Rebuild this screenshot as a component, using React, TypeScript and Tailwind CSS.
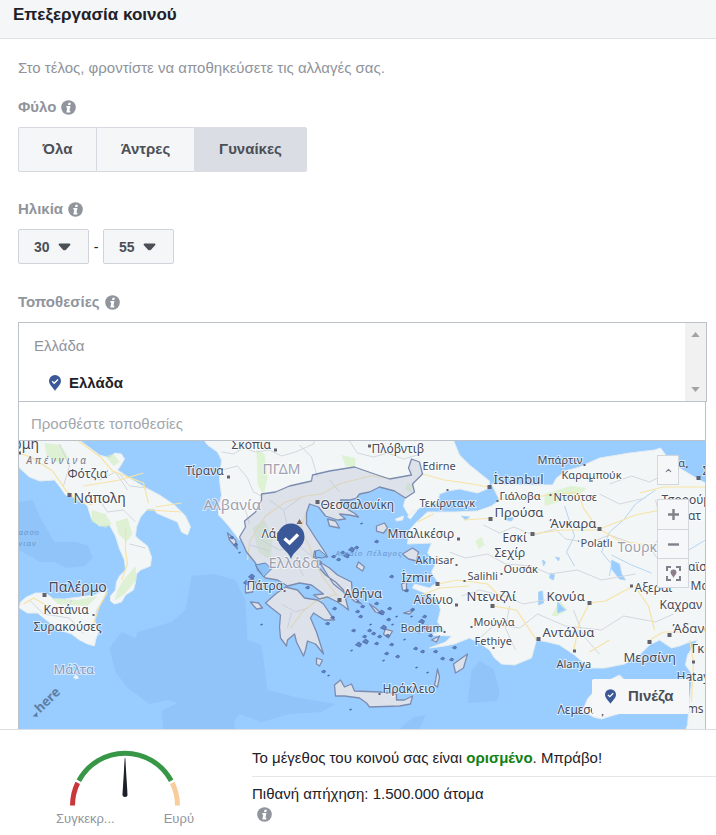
import React from 'react';
import { ChevronUp } from 'lucide-react';

type Label = { text: string; x: number; y: number; size: number; tone?: string; dot?: [number, number, number] };

const CITY = '#474b59';
const COUNTRY = '#9fa1b0';

const labels: Label[] = [
  { text: 'ώμη', x: 11, y: 449, size: 14, dot: [20, 453, 3] },
  { text: 'Φότζια', x: 68, y: 478, size: 12, dot: [108, 471, 1] },
  { text: 'Νάπολη', x: 74, y: 503, size: 14, dot: [70, 495, 4] },
  { text: 'Παλέρμο', x: 49, y: 592, size: 14, dot: [45, 595, 4] },
  { text: 'Κατάνια', x: 44, y: 614, size: 12, dot: [94, 615, 2] },
  { text: 'Συρακούσες', x: 34, y: 631, size: 12, dot: [101, 632, 2] },
  { text: 'Μάλτα', x: 54, y: 674, size: 13, tone: '#8a9bc0' },
  { text: 'Τίρανα', x: 186, y: 475, size: 12, dot: [229, 477, 3] },
  { text: 'Σκόπια', x: 232, y: 449, size: 12, dot: [276, 450, 3] },
  { text: 'ΠΓΔΜ', x: 263, y: 474, size: 14, tone: COUNTRY },
  { text: 'Αλβανία', x: 204, y: 510, size: 15, tone: COUNTRY },
  { text: 'Πλόβντιβ', x: 372, y: 453, size: 12, dot: [370, 446, 3] },
  { text: 'Edirne', x: 423, y: 470, size: 11 },
  { text: 'Θεσσαλονίκη', x: 321, y: 509, size: 12, dot: [318, 502, 4] },
  { text: 'Λάρισα', x: 262, y: 538, size: 12 },
  { text: 'Ελλάδα', x: 269, y: 568, size: 15, tone: COUNTRY },
  { text: 'Πάτρα', x: 247, y: 590, size: 12, dot: [285, 591, 2] },
  { text: 'Αθήνα', x: 344, y: 598, size: 13, dot: [340, 600, 4] },
  { text: 'Ηράκλειο', x: 383, y: 693, size: 12, dot: [380, 694, 2] },
  { text: 'Τεκίρνταγκ', x: 420, y: 507, size: 11, dot: [448, 490, 2] },
  { text: 'Μπαλικέσιρ', x: 388, y: 538, size: 12, dot: [459, 539, 3] },
  { text: 'Akhisar', x: 416, y: 564, size: 11, dot: [457, 565, 2] },
  { text: 'İzmir', x: 402, y: 582, size: 13, dot: [438, 584, 4] },
  { text: 'Αϊδίνιο', x: 414, y: 604, size: 12, dot: [457, 605, 3] },
  { text: 'Bodrum', x: 401, y: 632, size: 11, dot: [445, 632, 2] },
  { text: 'İstanbul', x: 494, y: 484, size: 13, dot: [490, 487, 4] },
  { text: 'Γιάλοβα', x: 500, y: 500, size: 11, dot: [498, 501, 2] },
  { text: 'Προύσα', x: 495, y: 517, size: 13, dot: [491, 519, 4] },
  { text: 'Μπάρτιν', x: 538, y: 464, size: 11, dot: [585, 465, 2] },
  { text: 'Καραμπούκ', x: 562, y: 479, size: 11, dot: [592, 481, 2] },
  { text: 'Ντούτσε', x: 554, y: 501, size: 11, dot: [551, 495, 2] },
  { text: 'Άνκαρα', x: 550, y: 528, size: 13, dot: [600, 529, 4] },
  { text: 'Polatlı', x: 581, y: 547, size: 11, dot: [579, 541, 1] },
  { text: 'Εσκί', x: 503, y: 542, size: 12, dot: [533, 534, 4] },
  { text: 'Σεχίρ', x: 495, y: 557, size: 12 },
  { text: 'Ουσάκ', x: 504, y: 573, size: 11, dot: [502, 574, 2] },
  { text: 'Salihli', x: 468, y: 580, size: 11, dot: [465, 581, 2] },
  { text: 'Τουρκία', x: 618, y: 552, size: 14, tone: COUNTRY },
  { text: 'Ντενιζλί', x: 467, y: 601, size: 13, dot: [493, 606, 4] },
  { text: 'Μούγλα', x: 474, y: 626, size: 11, dot: [472, 627, 2] },
  { text: 'Fethiye', x: 475, y: 645, size: 11, dot: [494, 648, 2] },
  { text: 'Κονύα', x: 547, y: 601, size: 13, dot: [590, 603, 4] },
  { text: 'Αντάλυα', x: 543, y: 637, size: 13, dot: [539, 639, 4] },
  { text: 'Alanya', x: 557, y: 668, size: 11, dot: [575, 651, 3] },
  { text: 'Μερσίνη', x: 624, y: 662, size: 13, dot: [650, 642, 4] },
  { text: 'Άδανα', x: 673, y: 633, size: 13, dot: [670, 635, 4] },
  { text: 'Γκαζ', x: 692, y: 653, size: 13 },
  { text: 'Hatay', x: 677, y: 681, size: 12, dot: [694, 662, 3] },
  { text: 'Homs', x: 671, y: 713, size: 12 },
  { text: 'Λεμεσός', x: 558, y: 714, size: 12 },
  { text: 'Αξεράι', x: 635, y: 592, size: 12, dot: [632, 586, 3] },
  { text: 'Καχραν', x: 660, y: 609, size: 12 },
  { text: 'Μαλ', x: 691, y: 590, size: 12 },
  { text: 'Καϊσ', x: 681, y: 571, size: 12 },
  { text: 'Τοκατ', x: 669, y: 520, size: 12 },
  { text: 'Τσορούμ', x: 662, y: 504, size: 12 },
  { text: 'Ινέπα', x: 657, y: 467, size: 11, dot: [687, 467, 2] },
  { text: 'Σα', x: 703, y: 475, size: 12, dot: [699, 478, 4] },
];

// x, y, radius of the small Aegean islands
const islands: [number, number, number][] = [
  [352, 550, 3], [347, 556, 3], [343, 553, 2], [339, 560, 2], [357, 548, 2], [334, 557, 2],
  [377, 542, 2], [392, 577, 2], [390, 609, 2], [371, 597, 2], [377, 604, 2], [382, 613, 3],
  [384, 628, 3], [361, 617, 2], [354, 631, 2], [359, 645, 3], [366, 642, 3], [374, 634, 2],
  [380, 637, 2], [352, 651, 1], [377, 644, 2], [392, 645, 2], [398, 657, 2], [384, 661, 1],
  [371, 625, 1], [413, 610, 2], [422, 622, 3], [427, 628, 3], [419, 632, 2], [431, 636, 2],
  [416, 649, 2], [423, 652, 2], [436, 652, 2], [443, 659, 2], [455, 648, 2], [417, 668, 1],
  [428, 673, 1], [452, 660, 2], [407, 591, 2], [324, 672, 2], [329, 676, 1], [351, 710, 1],
  [262, 625, 1], [333, 618, 2], [328, 624, 2], [335, 609, 2], [247, 583, 3], [252, 577, 3],
  [389, 620, 2], [393, 625, 1], [405, 640, 1], [358, 602, 1], [363, 607, 2], [397, 617, 1],
  [240, 553, 1], [236, 545, 2], [232, 538, 2], [308, 588, 2], [362, 524, 1], [370, 631, 2],
  [387, 654, 2], [358, 612, 2], [365, 637, 2], [388, 636, 2], [412, 617, 1], [425, 617, 2],
];

const greece = [
  'M240 537L246 527 245 521 256 512 262 500 262 494 276 492 290 486 312 481 313 475 330 471 355 467 375 474 390 479 412 475 409 468 412 459 420 462 423 474 413 484 415 492 406 498 395 491 380 487 370 492 360 494 357 498 350 500 341 500 346 508 356 514 359 517 350 515 340 514 346 519 338 520 326 516 319 507 310 504 307 513 307 524 316 538 326 553 328 557 320 556 315 551 314 557 322 562 318 566 326 575 336 582 344 590 349 610 344 606 338 602 328 597 320 599 314 595 324 594 312 585 300 583 288 586 278 580 266 578 258 570 256 563 247 552 244 545z',
  'M266 603L276 594 286 587 298 590 305 598 318 600 324 604 330 613 335 620 325 620 314 613 311 618 317 632 324 654 316 644 308 641 306 650 304 656 297 642 295 634 288 640 287 646 281 638 280 627 281 615 272 608z',
  'M320 562L330 568 338 575 352 582 353 596 362 604 356 602 344 592 334 584 328 575z',
  'M335 685L341 680 345 687 352 684 355 691 380 692 397 694 397 700 405 700 413 696 411 704 400 706 370 707 367 703 360 698 345 696 336 696z',
  'M328 519l8 2 4 7-10-2zM377 526l8-3 3 5-4 5-7-2zM403 554l10-6 6 4-2 9-8-2zM402 584l5-2 0 9-4-1z',
  'M454 664l14-10-4 14-8 5zM386 629l7 2-4 7-5-4zM251 602l8 1 4 5-6 1zM317 658l6 2-3 6-3-2zM436 681l2-12 2 8-2 10-3-2z',
  'M359 562l6 5-2 4-6-4zM370 604l6 4 6 6-6-2zM246 585l6-7 4 4-3 10-7 1zM404 613l10-3-4 4zM432 640l8-4-3 6zM236 540l-8-7 2 7 8 9z',
].join('');

const InfoIcon = () => (
  <svg viewBox="0 0 16 16" className="h-[15px] w-[15px]" aria-hidden="true">
    <circle cx="8" cy="8" r="7.8" fill="#90949c" />
    <path d="M8 2.800h2.500L10 5.200H7.500zM5.800 6.300h4.300l-1.100 5.200h1.100l-.3 1.700H5.700l1-5.200H5.500z" fill="#fff" />
  </svg>
);

const PinIcon = ({ className }: { className: string }) => (
  <svg viewBox="0 0 12 16" className={className} aria-hidden="true">
    <path d="M6 0a6 6 0 0 1 6 6c0 3.600-4.500 7-6 10C4.500 13 0 9.600 0 6a6 6 0 0 1 6-6z" fill="#3b5998" />
    <path d="M3.200 6.200l2 2L9 4.400" fill="none" stroke="#fff" strokeWidth="1.400" />
  </svg>
);

const FieldLabel = ({ text, id }: { text: string; id: string }) => (
  <div className="mb-2 flex h-6 items-center gap-[5px]">
    <h2 id={id} className="text-[15px] font-bold text-[#90949c]">{text}</h2>
    <InfoIcon />
  </div>
);

const AgeSelect = ({ value, label }: { value: number; label: string }) => {
  const ages = Array.from({ length: 48 }, (_, i) => i + 18);
  return (
    <div className="relative h-[35px] w-[71px]">
      <select
        aria-label={label}
        defaultValue={value}
        className="h-full w-full appearance-none rounded-xs border border-[#d0d3d9] bg-[#f5f6f7] pl-[15px] text-sm font-bold text-[#4b4f56]"
      >
        {ages.map((age) => (
          <option key={age}>{age}</option>
        ))}
      </select>
      <svg viewBox="0 0 13 8" className="pointer-events-none absolute top-[14px] right-[18px] h-2 w-[13px]" aria-hidden="true">
        <path d="M1.500.5h10q1.300.3.8 1.600L8 6.700q-1.500 1.300-3 0L.7 2.100Q.2.800 1.500.5z" fill="#4b4f56" />
      </svg>
    </div>
  );
};

const LocationMap = () => (
  <svg
    viewBox="19 441 687 288"
    preserveAspectRatio="xMidYMid slice"
    className="block h-[288px] w-full bg-[#99ccff]"
    fontFamily='"Noto Sans", sans-serif'
    role="img"
    aria-label="Χάρτης"
  >
    {/* deep water */}
    <g fill="#91c5fa">
      <path d="M19 502l14-2 8 18 14 24 22 0 12 4 4 12-8 8-18 2-12-6-14 0-22-12z" />
      <path d="M192 576L215 574 236 580 246 600 248 640 262 645 268 690 300 698 336 704 322 712 290 714 262 722 240 714 234 722 236 729 164 729 162 711 178 703 168 700 150 704 128 688 116 672 110 648 122 632 136 638 138 632 172 622 186 610z" />
      <path d="M472 671l8-10 14 8 6 22-2 10-30 2zM400 729l14-12 12-2-6 14z" />
    </g>

    {/* land */}
    <g fill="#f3f6f6" stroke="#e4edf0" strokeWidth="1">
      <path d="M15 438h62l23 17 10 3 5-5 7 1 3 5-4 7-3 4 12 8 15 9 15 8 15 10 11 11 5 11-3 8-6-3-4-10-12-5-9-4-2-4h-7l-7 8-4 10-1 9 3 3 9 7 4 11-1 9-10 4-4 4-1 8-2 8-8 5-4 7-7 2-4-3v-5l5-6 1-8 3-6 6-6-1-10-5-11-4-13-6-11-10 1-8-7-4-13-8-7-14-4-4-6-7-9-15 1-10-4-8-7-4-5z" />
      <path d="M21 602l6-5 9-4h10l8 6 11 0 15-2 15-2 13-6-5 11-6 10-2 10 4 12-3 8-1 6-7-2-8-4-8-6-12-4-12-9-10-8-10 0-8-5z" />
      <path d="M74 677l3-2 2 3-3 1z" />
      <path d="M203 438L208 445 218 452 222 460 220 480 222 495 219 508 219 515 224 520 230 527 240 540 262 535 300 500 350 485 390 488 406 498 404 506 410 517 420 508 438 503 440 494 448 491 460 489 478 493 490 488 490 481 470 465 460 455 453 438z" />
      <path d="M492 484L520 485 553 485 557 478 566 471 580 467 600 458 630 453 655 450 661 448 670 460 680 468 700 480 710 485 710 735 684 735 688 725 690 700 693 675 686 665 688 655 698 640 690 642 680 646 672 648 660 640 650 645 640 655 625 664 605 668 590 668 575 655 560 645 548 642 537 640 532 658 515 665 502 664 495 658 490 650 480 643 470 638 455 644 445 646 430 648 446 642 452 636 430 635 445 631 438 622 441 610 438 600 430 595 413 588 415 584 430 588 438 582 432 572 437 562 428 553 432 543 408 544 410 530 416 523 428 512 455 512 478 511 492 506 500 500z" />
      <path d="M583 711l5-12 12-14 20-10 18 18-10 18-26 8-8-2z" />
      <path d="M396 519l8-3-1 4-6 1zM408 517l6-7 3 1-6 8zM463 503l6-1 3 3-6 1z" />
      <path d={greece} stroke="none" />
    </g>

    {/* forests */}
    <g fill="#d3efc2" opacity=".65">
      <path d="M45 443l16 2 8 12-10 6-12-8zM92 510l14 4 6 10-6 4-14-6zM116 522l12-4 5 16-6 8-8-8zM118 590l6-10 12-14 1 14-12 14-10 7zM106 456l8-2 6 8-6 4zM52 598l26 2 20-4-10 10-30-2z" />
      <path d="M257 450l8 4 3 24-4 18-6-12zM253 528l12-8 8 18-2 22-12-8zM342 455l14 3 0 10-10-2zM545 494l26-8 16 2-8 8-20 6-14 4zM552 616l8-16 8 10-10 6zM408 483l6 2-2 8-6-4zM476 541l6-4 3 8-6 4z" />
    </g>

    {/* rivers and lakes */}
    <g fill="none" stroke="#b4d6f4" strokeWidth="1">
      <path d="M656 490l-20 14-12 16-14 12-8 20 10 12-2 12M565 506l10 30-8 16 8 14M612 555l20 10 20 8M706 540l-20 12" />
      <path d="M612 560l8 4 2 10 4 6-6-1-8-10z" fill="#99ccff" />
      <path d="M539 592l4-1 1 12-5 2zM551 573l4 2-1 5-4-2zM558 602l8 8-8 3zM543 560l3 2-2 4zM506 517l8 1-2 3-7-1zM462 516l8 1-4 3zM556 557l4 1-1 3z" fill="#99ccff" />
    </g>

    {/* regional borders */}
    <g fill="none" stroke="#d3d8de" strokeWidth="1">
      <path d="M222 452l12 2 10-6 12 4 14-2 12 6 14-4 18-8 2-8M300 445l12 12 6 20M222 470l16-4 10 12 6 14 8 4M236 500l10 10 4 14M350 441l8 12 16 4 14-4 16 6 14-4" />
      <path d="M484 525l16 8 14-6 20 8 22-6 10 10 24 4 20-8 22 8M450 552l16 6 22-4 18 10 26 2 18 8 28-4 24 10 34-6M462 596l18-6 24 6 20 8 22-4M478 640l18-16 24 4 18-14 28 12 36 4 22-14 32 6 18-8M610 484l22-8 18 6 20-10M600 494l20 10 26-6M656 500l8 30-12 20 18 26M510 606l-4 22 10 22M574 610l10 26 16 18" />
      <path d="M60 444l10 22-6 20M100 500l8 12 16-2 12 12M120 474l10 12 18 2M72 600l-6 14M250 545l20 6M100 480l16-8 12 18M130 544l16 4M30 600l14 14 26 4 14 16" />
      <path d="M270 500l14 10 4 16 16 4M284 510l20-14M262 540l18 10 20-4 12 10M282 604l14 8 12-4M292 612l-4 16M296 560l8 16M330 480l10 12" />
    </g>

    {/* roads */}
    <g fill="none" stroke="#f6e3a6" strokeWidth="1.200">
      <path d="M19 453l12 4 22 14 14 20 12 10 14 4M84 486l36-6 24-7M79 441l22 16 12 14 31 12 5 20M156 507l26-4M148 510l34 2M126 528v22l2 14-6 16M24 604l10-6 14 8M108 592l-8 14-6 18" />
      <path d="M248 560l2-18 16-26 20-14 20-6 16-2 18-10 30-8 20 2M308 510l-8 20 10 16 4 14 10 18 14 18M291 628l12-16 12-10 22-8M423 474l22 6 28 4 16 3M498 500l44-4 36-4 6 16 14 20M600 529l20 12 30 4M533 534l30-4 34 0M438 584l20-4 30 4 14 14M493 606l24 4 20 30M590 603l16-2 26-14M590 603l-10 20-6 28M650 640l14-8 40 0M655 630l-6-24-14-20M418 522l16-8M420 596l20-8 30-2M464 520l30-2" />
      <path d="M640 493l24-6 42 0M600 529l36-14 30-6M610 640l-20 12M690 640l4 22-2 40" />
    </g>

    {/* selected country */}
    <path d={greece} fill="#bcc3d8" fillOpacity=".42" stroke="#7c8cb0" strokeWidth="1.300" strokeLinejoin="round" />
    <path d="M256 565l10-2 6 6-8 8zM316 551l4-1 7 6-4 2-7-1z" fill="#8fc2f4" stroke="#6484b5" />
    <g fill="#4c6aa8" fillOpacity=".75">
      {islands.map(([x, y, r]) => (
        <path key={`${x}-${y}`} d={`M${x - r} ${y}l${r} ${-r} ${r} ${r - 1} ${-r / 2} ${r}z`} stroke="#4c6aa8" strokeWidth=".8" />
      ))}
    </g>
    <path d="M297 524l3-5 3 5z" fill="#7d6763" />

    {/* sea and mountain names */}
    <g fontStyle="italic" fill="#6b97cb">
      <text x="336" y="556" fontSize="8" letterSpacing="1">Αιγαίο Πέλαγος</text>
      <text x="19" y="535" fontSize="8" letterSpacing="1">ασσο</text>
      <text x="19" y="546" fontSize="8" letterSpacing="1">νιαν</text>
      <text x="27" y="464" fontSize="10" letterSpacing="3" fill="#737887">Απέννινα</text>
    </g>

    {labels.map(({ text, x, y, size, tone, dot }) => (
      <g key={text}>
        {dot && <rect x={dot[0] - dot[2] / 2} y={dot[1] - dot[2] / 2} width={dot[2]} height={dot[2]} fill="#62636f" />}
        <text x={x} y={y} fontSize={size} fill={tone ?? CITY} stroke="#fff" strokeWidth="2" strokeOpacity=".6" paintOrder="stroke">
          {text}
        </text>
      </g>
    ))}

    <g transform="translate(39 712) rotate(-44)" fill="#5f7fa3">
      <text x="0" y="2" fontSize="13" fontWeight="700">here</text>
      <path d="M-7-1h6l-3 4z" />
    </g>

    <path d="M291.500 559c-2-8-13.500-12-13.500-22a13.500 13.500 0 0 1 27 0c0 10-11.500 14-13.500 22z" fill="#3b5998" />
    <path d="M285 538.500l5 4.500 8.500-8.500" fill="none" stroke="#fff" strokeWidth="3.400" />
  </svg>
);

const Gauge = () => (
  <svg viewBox="0 0 112 56" className="h-14 w-28" aria-hidden="true">
    <g fill="none" strokeWidth="5">
      <path d="M3.500 55.500A52.500 52.500 0 0 1 8.700 32.800" stroke="#c9373c" />
      <path d="M9.800 30.800A52.500 52.500 0 0 1 102.200 30.800" stroke="#379746" />
      <path d="M103.300 32.800A52.500 52.500 0 0 1 108.500 55.500" stroke="#f8cd9c" />
    </g>
    <path d="M55.700 8h.6l2.200 36.500a2.500 2.500 0 0 1-5 0z" fill="#1d2129" />
  </svg>
);

const mapButton = 'flex items-center justify-center border border-[#d3d6db] bg-[#f6f7f9] text-[#7f828b]';

export default function App() {
  const genders = [
    { name: 'Όλα', style: 'w-[79px] bg-[#f5f6f7] border-[#d5d8de]' },
    { name: 'Άντρες', style: 'w-[97px] bg-[#f5f6f7] border-[#d5d8de] border-l-0 border-r-0' },
    { name: 'Γυναίκες', style: 'w-[113px] bg-[#dadde3] border-[#dadde3]' },
  ];

  return (
    <div className="bg-white font-['Liberation_Sans',Arial,sans-serif] text-[15px] text-[#1d2129]">
      <header className="h-[39px] border-b border-[#e0e2e5] bg-[#f5f6f7] px-[13px] pt-[3px]">
        <h1 className="text-[17px] leading-6 font-bold">Επεξεργασία κοινού</h1>
      </header>

      <main className="pt-[17px] pr-[9px] pl-[18px]">
        <p className="mb-[15px] leading-6 text-[#90949c]">Στο τέλος, φροντίστε να αποθηκεύσετε τις αλλαγές σας.</p>

        <section className="mb-[25px]">
          <FieldLabel text="Φύλο" id="gender" />
          <div role="group" aria-labelledby="gender" className="flex h-[45px]">
            {genders.map(({ name, style }, index) => (
              <button
                key={name}
                aria-pressed={index === 2}
                className={`border text-[15px] font-bold text-[#4b4f56] first:rounded-l-xs last:rounded-r-xs ${style}`}
              >
                {name}
              </button>
            ))}
          </div>
        </section>

        <section className="mb-[26px]">
          <FieldLabel text="Ηλικία" id="age" />
          <div role="group" aria-labelledby="age" className="flex items-center">
            <AgeSelect value={30} label="Ελάχιστη ηλικία" />
            <span className="w-[14px] text-center text-sm">-</span>
            <AgeSelect value={55} label="Μέγιστη ηλικία" />
          </div>
        </section>

        <section>
          <FieldLabel text="Τοποθεσίες" id="places" />
          <div className="flex h-20 border border-[#bdc1c9]">
            <div className="flex-1 pl-[15px]">
              <p className="mt-[11px] leading-6 text-[#90949c]">Ελλάδα</p>
              <div className="mt-[13px] ml-[15px] flex h-6 items-center gap-2">
                <PinIcon className="h-4 w-3" />
                <span className="font-bold">Ελλάδα</span>
              </div>
            </div>
            <div className="flex w-[21px] flex-col items-center justify-between bg-[#f1f1f1] py-[9px]">
              <svg viewBox="0 0 10 6" className="h-[5px] w-[9px]" aria-hidden="true"><path d="M0 6l5-6 5 6z" fill="#a3a3a3" /></svg>
              <svg viewBox="0 0 10 6" className="h-[5px] w-[9px]" aria-hidden="true"><path d="M0 0l5 6 5-6z" fill="#a3a3a3" /></svg>
            </div>
          </div>
          <div className="pr-px">
            <input
              aria-labelledby="places"
              placeholder="Προσθέστε τοποθεσίες"
              className="block h-[39px] w-full border-x border-b border-[#bdc1c9] px-3 pt-1 placeholder:text-[#a3a7ae]"
            />
            <div className="relative border-x border-[#bdc1c9]">
              <LocationMap />
              <div className="absolute top-[14px] right-4 flex w-8 flex-col">
                <button aria-label="Σύμπτυξη" className={`mb-[14px] h-[30px] w-[22px] ${mapButton}`}>
                  <ChevronUp className="h-[9px] w-[9px]" strokeWidth={3} />
                </button>
                <button aria-label="Μεγέθυνση" className={`h-[31px] ${mapButton}`}>
                  <svg viewBox="0 0 11 11" className="h-[11px] w-[11px]"><path d="M5.500 0v11M0 5.500h11" stroke="currentColor" strokeWidth="2.400" /></svg>
                </button>
                <button aria-label="Σμίκρυνση" className={`-mt-px h-[30px] ${mapButton}`}>
                  <svg viewBox="0 0 11 11" className="h-[11px] w-[11px]"><path d="M0 5.500h11" stroke="currentColor" strokeWidth="2.400" /></svg>
                </button>
                <button aria-label="Κεντράρισμα" className={`-mt-px h-[30px] ${mapButton}`}>
                  <svg viewBox="0 0 15 15" className="h-[15px] w-[15px]">
                    <path d="M1 5V1h4M10 1h4v4M14 10v4h-4M5 14H1v-4" fill="none" stroke="currentColor" strokeWidth="2" />
                    <path d="M7.500 3.500a3 3 0 0 1 3 3c0 2-2.200 3-3 5.500-.8-2.500-3-3.500-3-5.500a3 3 0 0 1 3-3z" fill="#8d7f89" />
                  </svg>
                </button>
              </div>
              <button className="absolute right-4 bottom-[15px] flex h-[35px] w-[97px] items-center gap-3 rounded-xs bg-[#f6f7f9] pl-[13px] text-[15px] font-bold text-[#4b4f56]">
                <PinIcon className="h-[15px] w-[11px]" />
                Πινέζα
              </button>
            </div>
          </div>
        </section>
      </main>

      <footer className="flex border-t border-[#dcdee2]">
        <div className="flex w-[252px] shrink-0 flex-col items-center pt-5 pr-[2px]">
          <Gauge />
          <div className="mt-[3px] flex w-[138px] justify-between text-[13px] leading-5 text-[#90949c]">
            <span>Συγκεκρ...</span>
            <span>Ευρύ</span>
          </div>
        </div>
        <div className="flex-1">
          <p className="mt-4 border-b border-[#e5e6e9] pb-[6px] leading-6">
            Το μέγεθος του κοινού σας είναι <strong className="text-[#118011]">ορισμένο</strong>. Μπράβο!
          </p>
          <p className="mt-[5px] leading-6">Πιθανή απήχηση: 1.500.000 άτομα</p>
          <div className="mt-px ml-[5px]">
            <InfoIcon />
          </div>
        </div>
      </footer>
    </div>
  );
}
